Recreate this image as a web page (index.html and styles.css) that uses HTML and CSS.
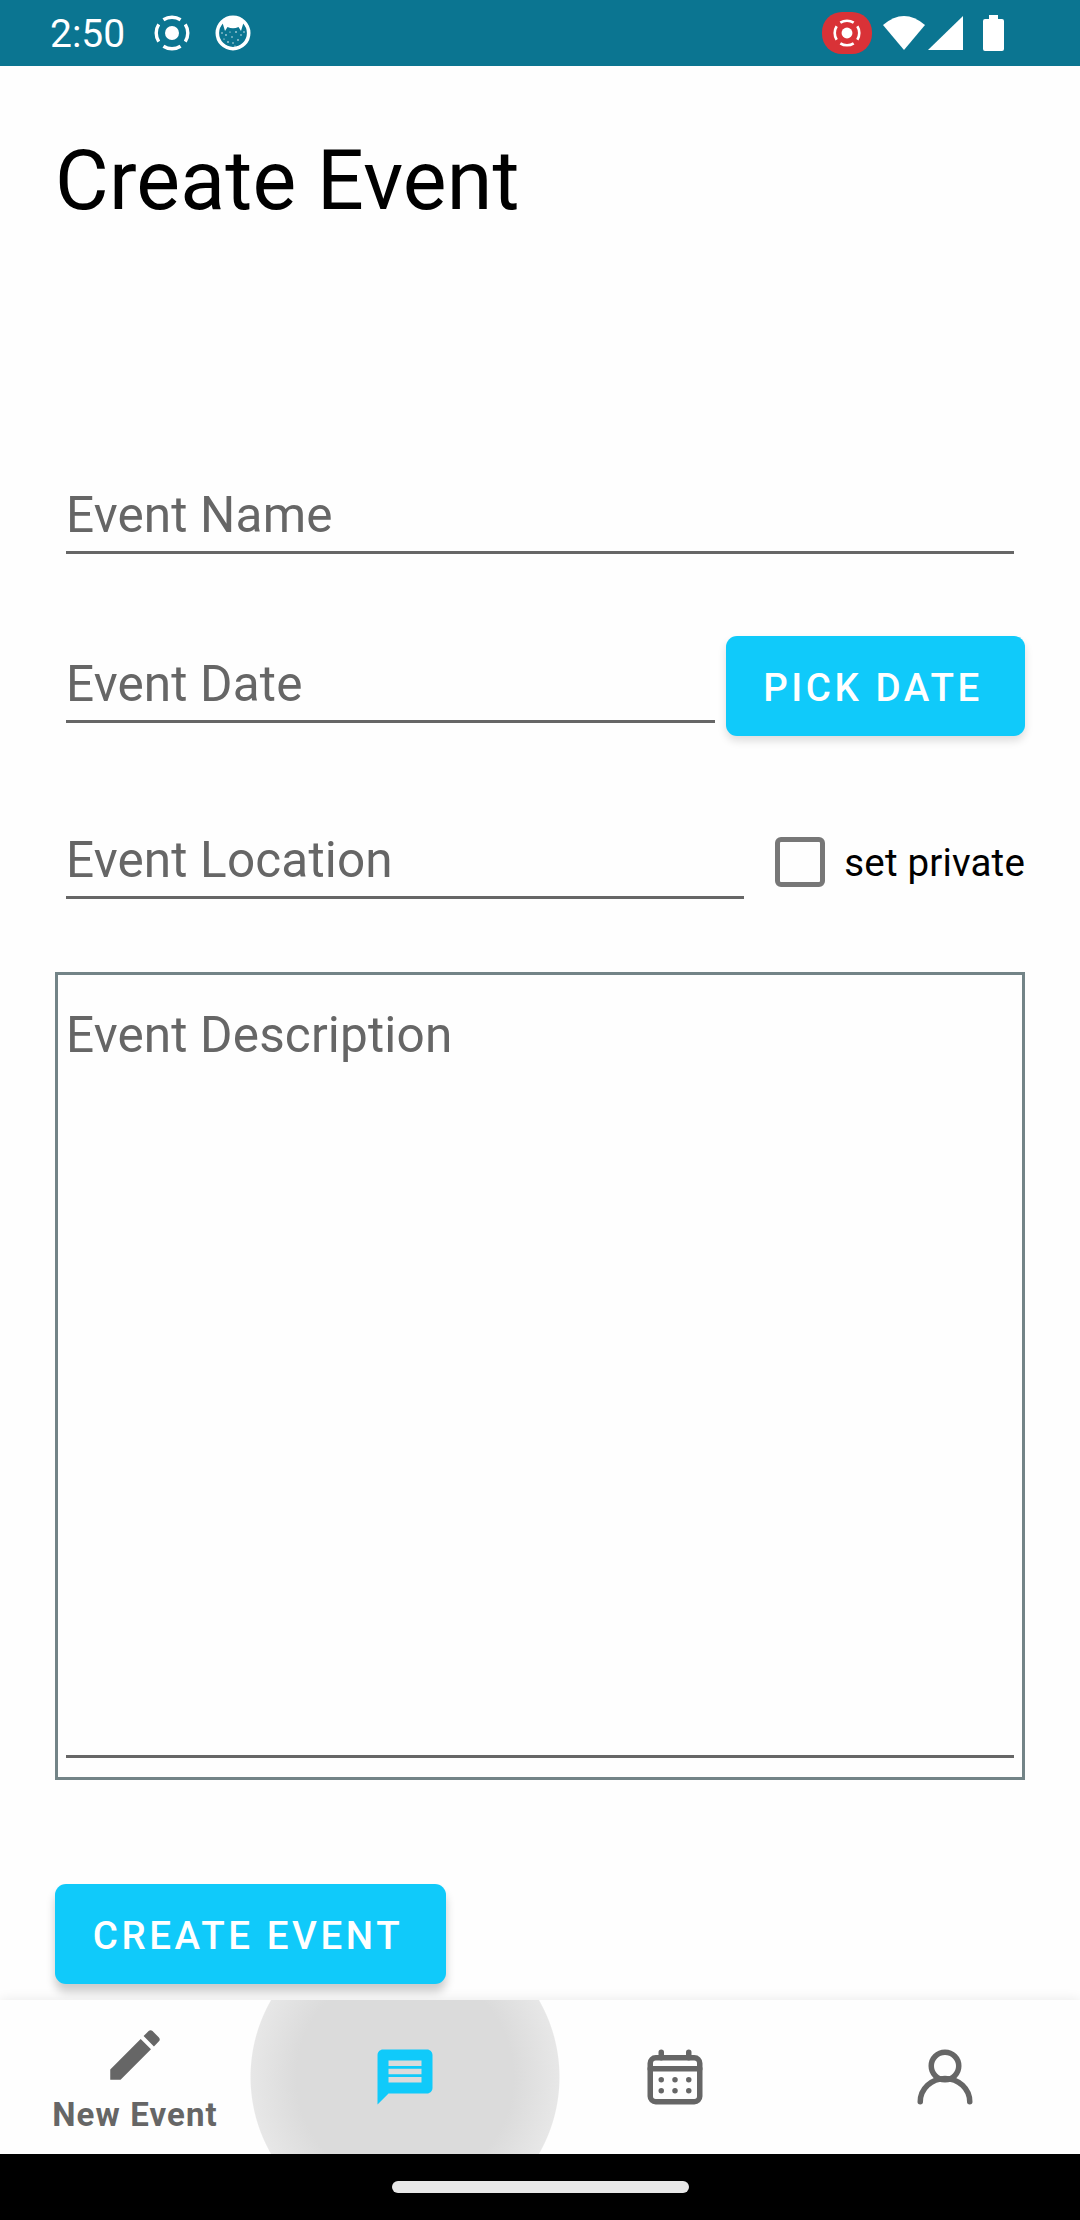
FILE: index.html
```html
<!DOCTYPE html>
<html lang="en">
<head>
<meta charset="utf-8">
<title>Create Event</title>
<link rel="stylesheet" href="styles.css">
</head>
<body>
<header class="status">
  <span class="clock">2:50</span>
  <svg class="rec" width="36" height="36" viewBox="0 0 36 36"><circle cx="18" cy="18" r="7" fill="#fff"/><circle class="ring" cx="18" cy="18" r="15.8" pathLength="360" stroke-dasharray="66 24" stroke-dashoffset="33"/></svg>
  <svg class="cat" width="36" height="36" viewBox="0 0 36 36"><circle cx="18" cy="18" r="15.7" fill="none" stroke="#fff" stroke-width="3.6"/><path d="M7 6L18 2L29 6L27.500 11L26 16L23.500 12Q18 14.500 12.500 12L10 16L8.500 11Z" fill="#fff"/><g fill="#fff"><circle cx="7" cy="18" r=".7"/><circle cx="11" cy="20" r=".8"/><circle cx="9" cy="24" r=".6"/><circle cx="15" cy="17" r=".6"/><circle cx="21" cy="17" r=".8"/><circle cx="17" cy="22" r=".7"/><circle cx="13" cy="27" r=".8"/><circle cx="18" cy="28" r=".7"/><circle cx="23" cy="25" r=".8"/><circle cx="26" cy="20" r=".7"/><circle cx="29" cy="17" r=".7"/><circle cx="20" cy="31" r=".6"/></g></svg>
  <span class="cast"><svg width="28" height="28" viewBox="0 0 36 36"><circle cx="18" cy="18" r="7" fill="#fff"/><circle class="ring" cx="18" cy="18" r="15.8" pathLength="360" stroke-dasharray="66 24" stroke-dashoffset="33"/></svg></span>
  <svg class="wifi" width="42" height="34" viewBox="0 0 42 34"><path d="M0 9Q21-9 42 9L21 34Z" fill="#fff"/></svg>
  <svg class="signal" width="35" height="34" viewBox="0 0 35 34"><path d="M35 0V34H0Z" fill="#fff"/></svg>
  <svg class="battery" width="21" height="36" viewBox="0 0 21 36"><path d="M6 0h9v4h4q2 0 2 2v28q0 2-2 2H2q-2 0-2-2V6q0-2 2-2h4z" fill="#fff"/></svg>
</header>
<main class="page">
  <h1 class="title">Create Event</h1>
  <div class="field name">Event Name</div>
  <div class="row date-row">
    <div class="field date">Event Date</div>
    <button class="button pick">PICK DATE</button>
  </div>
  <div class="row place-row">
    <div class="field place">Event Location</div>
    <label class="private"><span class="box"></span>set private</label>
  </div>
  <div class="description"><div class="field desc">Event Description</div></div>
  <button class="button create">CREATE EVENT</button>
</main>
<nav class="tabs">
  <a class="tab labelled">
    <svg width="66" height="66" viewBox="0 0 24 24"><path fill="#666" d="M3 17.25V21h3.75L17.81 9.94l-3.75-3.75L3 17.25zM20.71 7.04c.39-.39.39-1.02 0-1.41l-2.34-2.34c-.39-.39-1.02-.39-1.41 0l-1.83 1.83 3.75 3.75 1.83-1.83z"/></svg>
    <span class="tab-label">New Event</span>
  </a>
  <a class="tab pressed">
    <svg width="66" height="66" viewBox="0 0 24 24"><path fill="#10cafa" d="M20 2H4c-1.1 0-1.99.9-1.99 2L2 22l4-4h14c1.100 0 2-.9 2-2V4c0-1.100-.9-2-2-2zM6 9h12v2H6V9zm12 5H6v-2h12v2zm0-6H6V6h12v2z"/></svg>
  </a>
  <a class="tab">
    <svg width="66" height="66" viewBox="0 0 24 24"><g fill="none" stroke="#666" stroke-width="2" stroke-linecap="round"><rect x="3" y="5" width="18" height="16" rx="2"/><path d="M3 9H21M7 3V5M17 3V5"/></g><g fill="#666"><circle cx="7" cy="13" r="1"/><circle cx="12" cy="13" r="1"/><circle cx="17" cy="13" r="1"/><circle cx="7" cy="17" r="1"/><circle cx="12" cy="17" r="1"/><circle cx="17" cy="17" r="1"/></g></svg>
  </a>
  <a class="tab">
    <svg width="66" height="66" viewBox="0 0 24 24"><g fill="none" stroke="#666" stroke-width="2" stroke-linecap="round"><circle cx="12" cy="8" r="5"/><path d="M3 21a9 8.500 0 0 1 18 0"/></g></svg>
  </a>
</nav>
<footer class="home"><span class="pill"></span></footer>
</body>
</html>
```
FILE: styles.css
```css
* { box-sizing: border-box; }
body { margin: 0; width: 1080px; height: 2220px; display: flex; flex-direction: column; overflow: hidden; background: #fefefe; font-family: Roboto, sans-serif; }
svg { display: block; flex: none; }
.status { height: 66px; flex: none; display: flex; align-items: center; padding: 0 76px 0 50px; background: #0b7591; color: #fff; }
.clock { width: 104px; font-size: 39px; line-height: 46px; padding-top: 2px; }
.ring { fill: none; stroke: #fff; stroke-width: 3.400; }
.cat { margin-left: 25px; }
.cast { display: flex; align-items: center; justify-content: center; width: 50px; height: 42px; margin-left: auto; border-radius: 20px; background: #d93237; }
.wifi { margin-left: 11px; }
.signal { margin-left: 3px; }
.battery { margin-left: 20px; }
.page { flex: none; height: 1934px; padding: 0 55px; display: flex; flex-direction: column; }
.title { margin: 66px 0 0; font-size: 82.500px; line-height: 97px; font-weight: 400; letter-spacing: .2px; color: #000; }
.field { height: 72px; margin: 0 11px; padding-top: 4px; border-bottom: 3px solid #666; font-size: 49.500px; line-height: 58px; letter-spacing: .15px; color: #666; }
.name { margin-top: 253px; }
.row { display: flex; justify-content: space-between; }
.date-row { margin-top: 82px; height: 100px; }
.date { width: 649px; margin-top: 15px; }
.button { flex: none; height: 100px; padding: 2px 5px 0 0; border: 0; border-radius: 11px; background: #10cafa; color: #fff; font: 500 38.500px/45px Roboto, sans-serif; letter-spacing: 3.560px; box-shadow: 0 5px 8px rgba(0,0,0,.13); }
.pick { width: 299px; }
.place-row { margin-top: 91px; height: 72px; }
.place { width: 678px; }
.private { display: flex; align-items: center; height: 50px; margin-top: 10px; font-size: 38.500px; line-height: 45px; letter-spacing: .18px; color: #000; }
.box { width: 50px; height: 50px; margin-right: 19px; border: 5.500px solid #777; border-radius: 6px; }
.description { height: 808px; margin-top: 73px; padding: 27px 8px 0; border: 3px solid #738487; }
.desc { height: 756px; margin: 0; }
.create { width: 391px; margin-top: 104px; box-shadow: 0 8px 10px rgba(0,0,0,.2); }
.tabs { position: relative; height: 154px; flex: none; display: grid; grid-template-columns: repeat(4, minmax(0, 1fr)); background: #fefefe; box-shadow: 0 0 12px rgba(0,0,0,.09); }
.tab { display: flex; flex-direction: column; align-items: center; justify-content: center; }
.labelled { justify-content: flex-start; padding-top: 22px; }
.tab-label { margin-top: 7px; font-size: 33px; line-height: 39px; font-weight: 700; letter-spacing: 1.100px; white-space: nowrap; color: #666; }
.pressed { width: 310px; justify-self: center; background: radial-gradient(circle 155px, #dbdbdb 0 70%, #e7e7e7 99.300%, transparent 100%); }
.home { height: 66px; flex: none; display: flex; justify-content: center; padding-top: 27px; background: #000; }
.pill { width: 297px; height: 12px; border-radius: 6px; background: #e8e8e8; }
```
